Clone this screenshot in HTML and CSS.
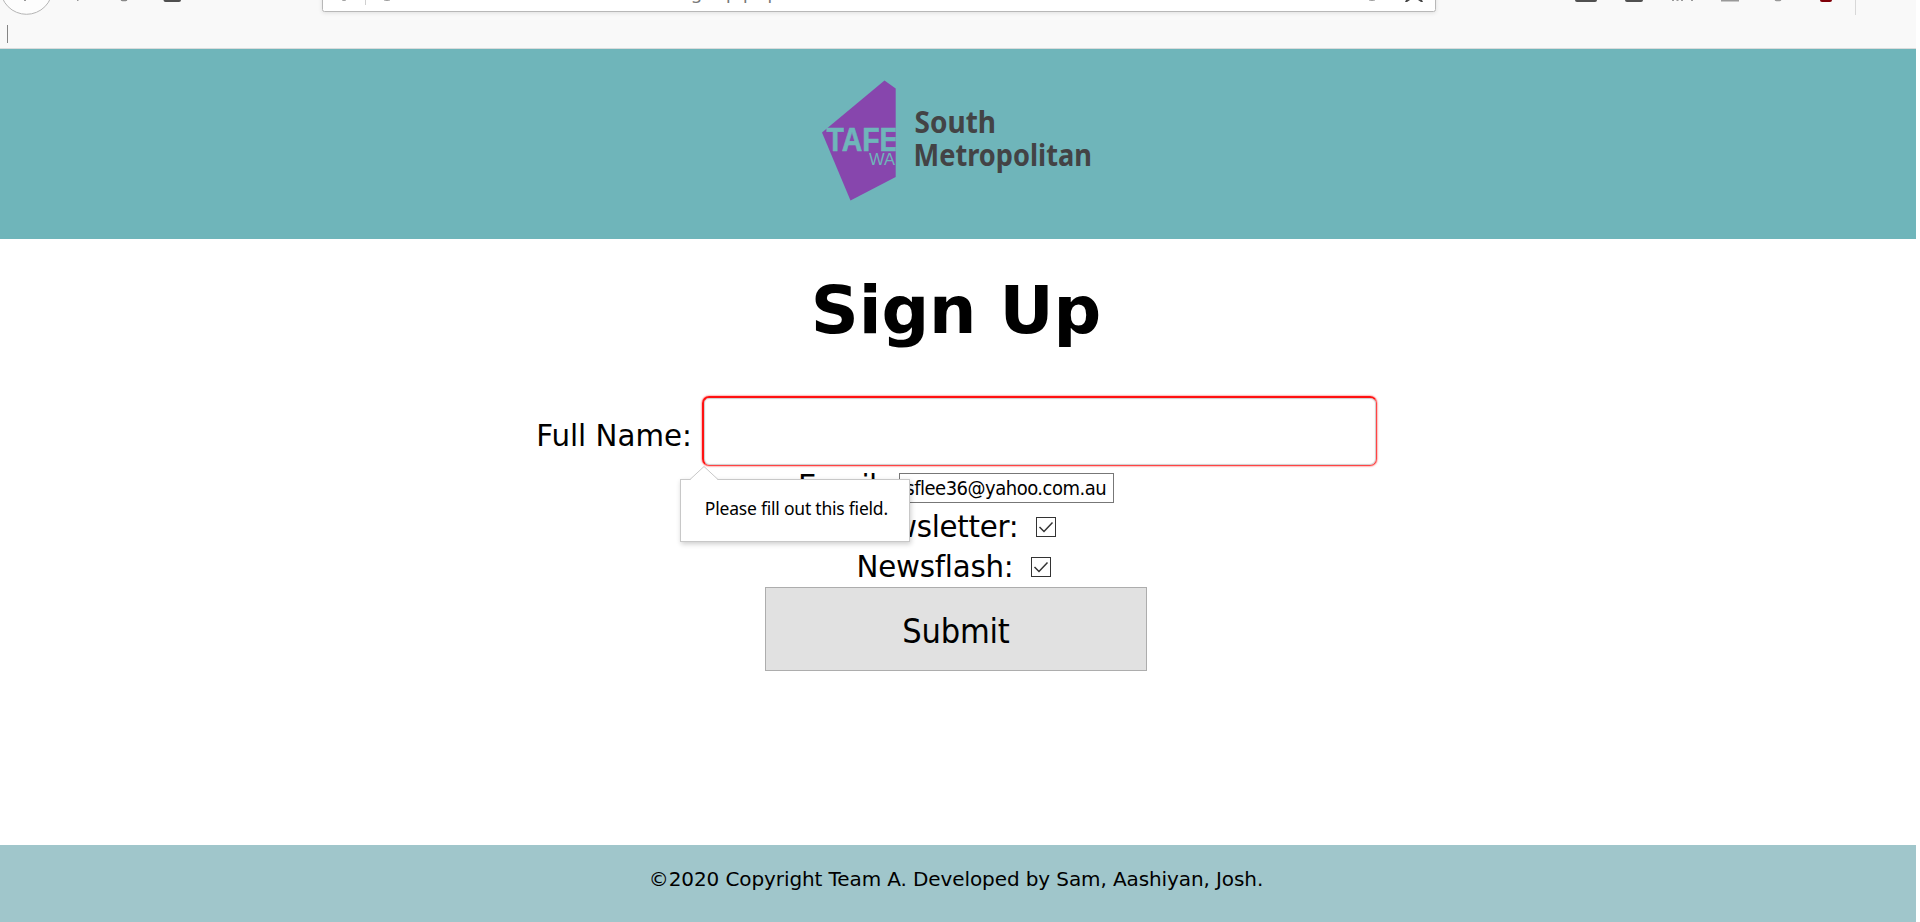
FILE: index.html
```html
<!DOCTYPE html>
<html lang="en">
<head>
<meta charset="utf-8">
<title>Sign Up</title>
<link rel="stylesheet" href="styles.css">
</head>
<body>
<div class="page">
  <div class="toolbar">
    <svg class="chrome" width="1916" height="48" viewBox="0 0 1916 48">
      <defs><filter id="soft" x="-5%" y="-50%" width="110%" height="200%"><feGaussianBlur stdDeviation="2"/></filter></defs>
      <circle cx="26.5" cy="-11.7" r="26" fill="#fdfdfd" stroke="#b5b5b5"/>
      <path d="M24 0h2M77 0h1.500" stroke="#999" stroke-width="2"/>
      <path d="M121 0q3 1 6 0" stroke="#888" stroke-width="1.500" fill="none"/>
      <rect x="163.500" y="-8" width="17.500" height="10" rx="2" fill="#505050"/>
      <rect x="322" y="-8" width="1114" height="21" rx="2" fill="#000" opacity=".1" filter="url(#soft)"/>
      <rect x="322.500" y="-8.500" width="1113" height="20" rx="2" fill="#fff" stroke="#b8b8b8"/>
      <path d="M365.500 0v5" stroke="#d0d0d0"/>
      <path d="M342 0q2 1 4 0M384 0q3 1 6 0M1369 0q3 1 6 0" stroke="#999" fill="none"/>
      <g class="url"><text x="691" y="-1.500">g</text><text x="726" y="-1.500">p</text><text x="743" y="-1.500">p</text><text x="767.500" y="-1.500">p</text></g>
      <path d="M1406 0h4l-3 2h-2zM1422 0h-4l3 2h2z" fill="#444"/>
      <rect x="1575" y="-8" width="22" height="10" rx="2" fill="#505050"/>
      <rect x="1625" y="-8" width="18" height="10" rx="2" fill="#505050"/>
      <path d="M1673 0v1M1677.500 0v1M1682 0v1M1692 0v1" stroke="#999" stroke-width="2"/>
      <path d="M1721 .5h18" stroke="#999" stroke-width="2"/>
      <path d="M1775 0q3 1 6 0" stroke="#999" stroke-width="1.500" fill="none"/>
      <rect x="1820" y="-8" width="12" height="10" rx="2" fill="#800008"/>
      <path d="M1855.500 0v15" stroke="#d8d8d8"/>
      <path d="M7.500 25v18" stroke="#858585"/>
    </svg>
  </div>
  <header class="banner">
    <svg class="logo" width="280" height="130" viewBox="816 76 280 130">
      <defs><clipPath id="shape"><rect x="816" y="76" width="79.700" height="130"/></clipPath></defs>
      <path d="M884.500 80.500 895.700 88.500V177L850.500 200.500 822 132.500Z" fill="#8746ad"/>
      <g clip-path="url(#shape)">
        <text class="tafe" x="826.500" y="151" textLength="72" lengthAdjust="spacingAndGlyphs">TAFE</text>
        <text class="wa" x="869" y="165" textLength="26" lengthAdjust="spacingAndGlyphs">WA</text>
      </g>
      <text class="name" x="914.500" y="132.500" textLength="81.500" lengthAdjust="spacingAndGlyphs">South</text>
      <text class="name" x="913.500" y="165.500" textLength="178.500" lengthAdjust="spacingAndGlyphs">Metropolitan</text>
    </svg>
  </header>
  <main class="content">
    <h1 class="title">Sign Up</h1>
    <form class="form">
      <div class="row row-name"><label class="label">Full Name:</label><div class="field-wrap"><div class="name-field"></div>
        <div class="tooltip">
          <svg class="arrow" width="30" height="15" viewBox="0 0 30 15"><path d="M0 14.500 1 14 15 .5 29 14 30 14.500V15H0Z" fill="#fff"/><path d="M1 13.500 15 .5 29 13.500" fill="none" stroke="#c8c8c8"/></svg>
          <span class="tip-text">Please fill out this field.</span>
        </div></div></div>
      <div class="row row-email"><label class="label">Email:</label><div class="email-field">sflee36@yahoo.com.au</div></div>
      <div class="row row-letter"><label class="label">Newsletter:</label><svg class="check" width="20" height="20"><rect x=".5" y=".5" width="19" height="19" fill="#fff" stroke="#333"/><path d="M3.500 10 8 14.500 16.500 5.500" fill="none" stroke="#333" stroke-width="1.500"/></svg></div>
      <div class="row row-flash"><label class="label">Newsflash:</label><svg class="check" width="20" height="20"><rect x=".5" y=".5" width="19" height="19" fill="#fff" stroke="#333"/><path d="M3.500 10 8 14.500 16.500 5.500" fill="none" stroke="#333" stroke-width="1.500"/></svg></div>
      <button class="submit" type="button">Submit</button>
    </form>
  </main>
  <footer class="footer"><span class="copyright">©2020 Copyright Team A. Developed by Sam, Aashiyan, Josh.</span></footer>
</div>
</body>
</html>
```
FILE: styles.css
```css
* { box-sizing: border-box; }
body { margin: 0; background: #fff; color: #000; font-family: "DejaVu Sans", sans-serif; overflow: hidden; }
.page { width: 1916px; height: 922px; display: flex; flex-direction: column; }
.toolbar { height: 49px; background: #f9f9f9; border-bottom: 1px solid #d9dcdc; }
.chrome { display: block; }
.url { font: 18px "Noto Sans", sans-serif; fill: #777; }
.banner { height: 190px; background: #6fb5ba; padding: 27px 0 0 816px; }
.logo { display: block; }
.tafe { font: bold 33px "Liberation Sans", sans-serif; fill: #6fb5ba; stroke: #6fb5ba; stroke-width: .6px; }
.wa { font: 17px "Liberation Sans", sans-serif; fill: #6fb5ba; }
.name { font: bold 30px "Noto Sans", sans-serif; fill: #434345; }
.content { height: 606px; display: flex; flex-direction: column; align-items: center; padding-right: 4px; }
.title { margin: 31px 0 0; height: 124px; line-height: 80px; font-size: 66.700px; font-weight: bold; letter-spacing: -.1px; white-space: nowrap; }
.form { display: flex; flex-direction: column; align-items: center; width: 100%; }
.row { display: flex; justify-content: center; height: 40px; padding-left: 1px; }
.label { font-size: 29.300px; line-height: 40px; white-space: nowrap; }
.row-name { height: 73px; gap: 10px; }
.row-name .label { padding-top: 22px; }
.field-wrap { position: relative; padding-top: 2px; }
.name-field { width: 675px; height: 70px; border: 1px solid #bbb; border-radius: 7px; border-color: #f11 #f44 #f44 #f11; border-width: 2px 1px 1px 2px; box-shadow: 0 0 2px #f22, inset 0 0 1px 1px #ccc; }
.row-email { gap: 13px; height: 40px; padding: 0; }
.row-email .label { line-height: 38px; letter-spacing: -.5px; }
.email-field { width: 215px; height: 30px; margin-top: 6px; border: 1px solid #777; background: #fff; font: 20px/29px "DejaVu Sans Condensed", "DejaVu Sans", sans-serif; font-stretch: condensed; letter-spacing: -.5px; text-align: right; padding-right: 7px; white-space: nowrap; overflow: hidden; }
.row-letter, .row-flash { gap: 18px; padding: 0 2px 0 0; letter-spacing: -.25px; }
.row-flash { padding-right: 4px; }
.check { margin-top: 10px; }
.submit { width: 382px; height: 84px; border: 1px solid #adadad; background: #e1e1e1; color: #000; padding: 4px 0 0; font: 34px "DejaVu Sans Condensed", "DejaVu Sans", sans-serif; font-stretch: condensed; letter-spacing: -.2px; }
.tooltip { position: absolute; left: -22px; top: 85px; width: 230px; height: 63px; background: #fff; border: 1px solid #c8c8c8; box-shadow: 1px 2px 5px rgba(0,0,0,.2); padding: 15px 0 0 24px; z-index: 2; }
.arrow { position: absolute; left: 8px; top: -14px; }
.tip-text { font: 17.500px/26px "Noto Sans", sans-serif; letter-spacing: -.22px; white-space: nowrap; }
.footer { height: 77px; background: #a0c6cb; text-align: center; padding: 22px 4px 0 0; }
.copyright { font-size: 20px; line-height: 24px; letter-spacing: -.1px; white-space: nowrap; }
```
